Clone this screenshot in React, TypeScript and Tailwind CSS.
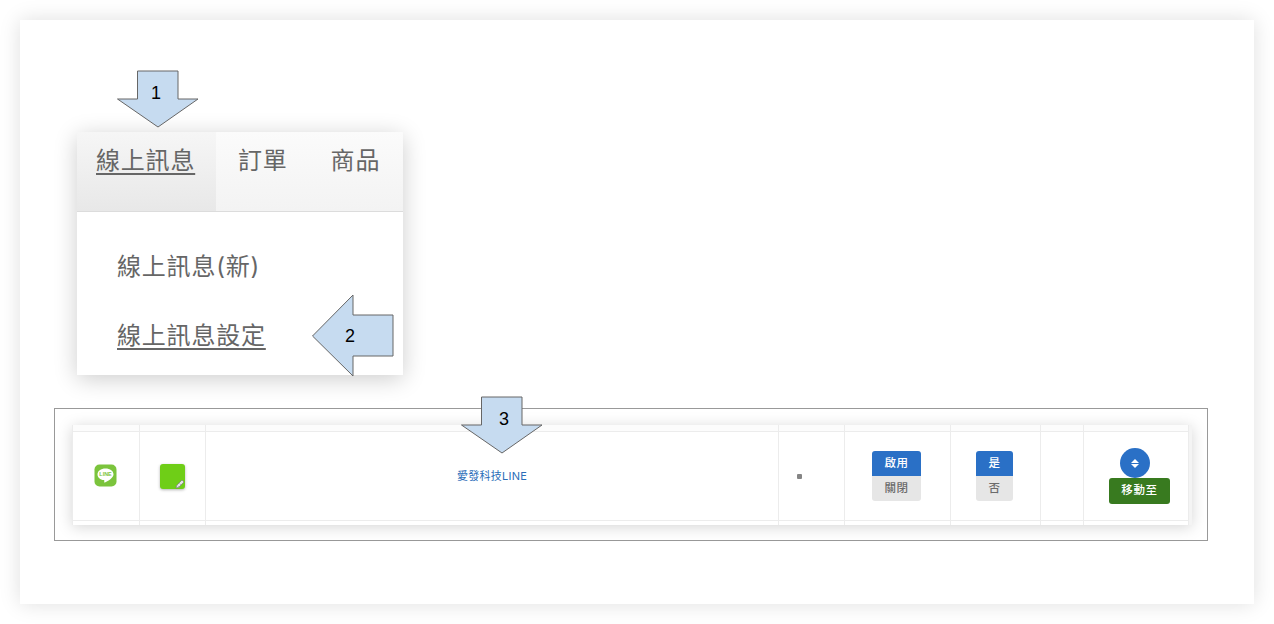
import React from 'react';

const cjk = "font-['Inter','Noto_Sans_CJK_TC',sans-serif]";

const columns = 'grid-cols-[67px_66px_573px_66px_106px_90px_43px_105px]';

const Arrow: React.FC<{ className: string; width: number; height: number; points: string; label: string; labelClass: string }> = ({
  className,
  width,
  height,
  points,
  label,
  labelClass,
}) => (
  <div className={`absolute ${className}`}>
    <svg width={width} height={height} viewBox={`0 0 ${width} ${height}`} className="block">
      <polygon points={points} fill="#c6dbf0" stroke="#666666" strokeWidth="1" />
    </svg>
    <span className={`absolute font-['Liberation_Sans',sans-serif] text-[18px] leading-5 text-black ${labelClass}`}>{label}</span>
  </div>
);

const LineIcon = () => (
  <svg width="23" height="23" viewBox="0 0 23 23" className="block">
    <rect x="0.5" y="0.5" width="22" height="22" rx="5" fill="#7bc43c" />
    <path d="M11.5 4.5c-4.6 0-8 2.6-8 5.9 0 3 2.7 5.3 6.4 5.7.4.1.5.3.4.7l-.1 1.4c0 .4.3.5.7.3 2.4-1.3 8.6-4.6 8.6-8.1 0-3.3-3.4-5.9-8-5.9z" fill="#fff" />
    <text x="11.5" y="12.2" textAnchor="middle" fontSize="5.4" fontWeight="700" fill="#7bc43c" fontFamily="Liberation Sans, sans-serif">LINE</text>
  </svg>
);

const Toggle: React.FC<{ on: string; off: string; width: string }> = ({ on, off, width }) => (
  <div className={`flex flex-col mr-[2px] ${width} ${cjk} text-[11.500px] font-medium tracking-[0.5px]`}>
    <div className="h-[25px] flex items-center justify-center rounded-t-[3px] bg-[#2a70c6] text-white">{on}</div>
    <div className="h-[25px] flex items-center justify-center rounded-b-[3px] bg-[#e6e6e6] text-[#6b6b6b]">{off}</div>
  </div>
);

const bodyCells = [
  <div className="pb-[1px] mr-[2px]"><LineIcon /></div>,
  <div className="relative w-[25px] h-[25px] rounded-[3px] bg-[#6fce17] shadow-[0_1px_3px_rgba(0,0,0,0.3)]">
    <svg width="10" height="10" viewBox="0 0 10 10" className="absolute right-0 bottom-0">
      <path d="M1 9l.6-2.600L7 1l2 2-5.400 5.400z" fill="#e4e4e4" stroke="#7d7d7d" strokeWidth="0.7" />
      <path d="M2.500 6.500l2 2M4.500 4.500l1.500 1.500" stroke="#9a9a9a" strokeWidth="0.6" />
    </svg>
  </div>,
  <span className={`${cjk} text-[11px] text-[#2a6db8] tracking-[0.25px] pt-[1px]`}>愛發科技LINE</span>,
  <div className="w-[5px] h-[5px] mr-[24px] mt-[1px] bg-[#858585] rounded-[1px]" />,
  <Toggle on="啟用" off="關閉" width="w-[49px]" />,
  <Toggle on="是" off="否" width="w-[37px]" />,
  null,
  <div className="flex flex-col items-center pl-[7px]">
    <div className="w-[30px] h-[30px] mr-[10px] rounded-full bg-[#2a70c6] flex flex-col items-center justify-center gap-[1px]">
      <div className="w-0 h-0 border-x-[4px] border-x-transparent border-b-[4px] border-b-white" />
      <div className="w-0 h-0 border-x-[4px] border-x-transparent border-t-[4px] border-t-white" />
    </div>
    <div className={`w-[61px] h-[26px] flex items-center justify-center rounded-[3px] bg-[#387a1f] text-white ${cjk} text-[11.500px] font-medium tracking-[0.6px]`}>
      移動至
    </div>
  </div>,
];

export default function App() {
  return (
    <div className="relative h-[624px] overflow-hidden bg-white p-[20px]">
      <div className="h-[584px] bg-white shadow-[0_0_20px_rgba(0,0,0,0.13)] pt-[112px]">
        {/* menu */}
        <div className={`ml-[57px] w-[326px] bg-white shadow-[0_4px_22px_rgba(0,0,0,0.2)] text-[#666] text-[24px] tracking-[0.8px] leading-8 ${cjk}`}>
          <div className="flex h-[80px] border-b border-[#dcdcdc] bg-gradient-to-b from-[#fbfbfb] to-[#f3f3f3]">
            <div className="w-[139px] pl-[19px] pt-[13px] underline decoration-[1.500px] underline-offset-[4px] bg-gradient-to-b from-[#f6f6f6] to-[#e8e8e8]">線上訊息</div>
            <div className="pl-[22px] pt-[13px]">訂單</div>
            <div className="pl-[43px] pt-[13px]">商品</div>
          </div>
          <div className="pt-[20px] pb-[5px] pl-[40px]">
            <div className="h-[69px] flex items-center">線上訊息(新)</div>
            <div className="h-[69px] flex items-center underline decoration-[1.500px] underline-offset-[4px]">線上訊息設定</div>
          </div>
        </div>

        {/* screenshot of the channel table */}
        <div className="mt-[33px] ml-[34px] w-[1154px] h-[133px] border border-[#999] pt-[16px] pl-[17px]">
          <div className={`grid ${columns} grid-rows-[7px_89px_4px] w-[1120px] border-l border-r-[3px] border-l-[#ececec] border-r-[#f4f4f4] bg-white shadow-[0_2px_14px_rgba(0,0,0,0.17)]`}>
            {bodyCells.map((_, i) => (
              <div key={`top-${i}`} className="border-r border-b border-[#ececec] bg-[#fcfcfc]" />
            ))}
            {bodyCells.map((cell, i) => (
              <div key={`cell-${i}`} className="border-r border-b border-[#ececec] flex items-center justify-center">
                {cell}
              </div>
            ))}
            {bodyCells.map((_, i) => (
              <div key={`bottom-${i}`} className="border-r border-[#ececec]" />
            ))}
          </div>
        </div>
      </div>

      <Arrow
        className="left-[117px] top-[70px]"
        width={82}
        height={58}
        points="20.500,1 61,1 61,29 81,29 41,57 0.500,29 20.500,29"
        label="1"
        labelClass="left-[34px] top-[13px]"
      />
      <Arrow
        className="left-[312px] top-[294px]"
        width={82}
        height={83}
        points="0.500,42 41,1 41,21 81,21 81,62 41,62 41,82"
        label="2"
        labelClass="left-[33px] top-[32px]"
      />
      <Arrow
        className="left-[461px] top-[396px]"
        width={82}
        height={58}
        points="20.500,1 61,1 61,29 81,29 41,57 0.500,29 20.500,29"
        label="3"
        labelClass="left-[38px] top-[13px]"
      />
    </div>
  );
}
